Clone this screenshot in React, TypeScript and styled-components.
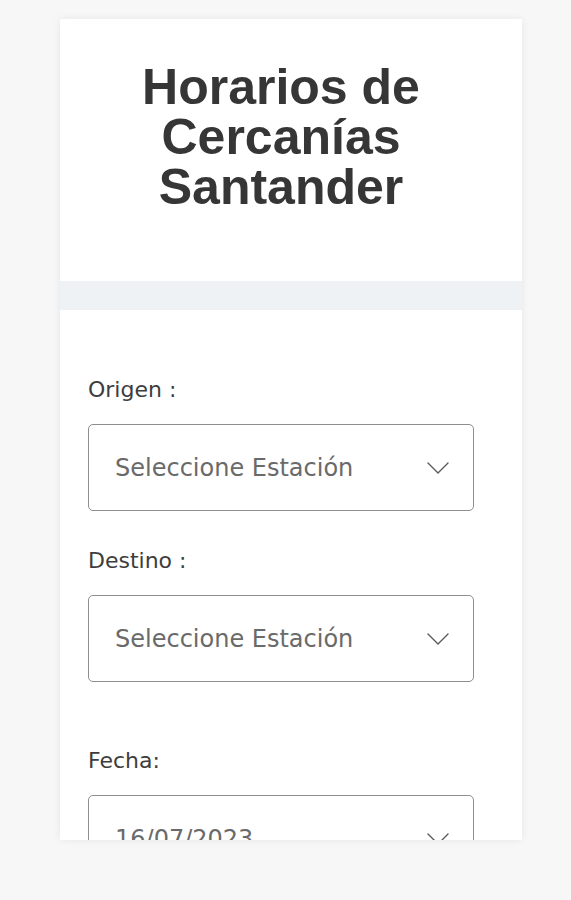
import styled, { createGlobalStyle } from "styled-components";

const GlobalStyle = createGlobalStyle`
  html, body {
    margin: 0;
    padding: 0;
    background: #f7f7f7;
  }
`

function Chevron() {
    return <svg width="22" height="12" viewBox="0 0 22 12" fill="none">
        <polyline points="1,1 11,11 21,1" stroke="#5a5a5a" strokeWidth="1.4" strokeLinecap="round" strokeLinejoin="round"/>
    </svg>
}

function Field({label, value, gap}: { label: string, value: string, gap: number }) {
    return <FieldGroup $gap={gap}>
        <Label>{label}</Label>
        <SelectBox>
            <SelectText>{value}</SelectText>
            <Chevron/>
        </SelectBox>
    </FieldGroup>
}

export default function App() {
    return <Page>
        <GlobalStyle/>
        <Card>
            <Header>
                <Title>Horarios de Cercanías Santander</Title>
            </Header>
            <Band/>
            <Form>
                <Field label="Origen :" value="Seleccione Estación" gap={0}/>
                <Field label="Destino :" value="Seleccione Estación" gap={37}/>
                <Field label="Fecha:" value="16/07/2023" gap={66}/>
            </Form>
        </Card>
    </Page>
}

const Page = styled.div`
  min-height: 900px;
  box-sizing: border-box;
  padding: 19px 49px 0 60px;
  background: #f7f7f7;
`

const Card = styled.div`
  width: 462px;
  height: 821px;
  overflow: hidden;
  background: #ffffff;
  box-shadow: 0 0 8px rgba(0, 0, 0, 0.07);
  display: flex;
  flex-direction: column;
`

const Header = styled.header`
  padding: 43px 40px 69px 20px;
`

const Title = styled.h1`
  margin: 0;
  text-align: center;
  font-family: "Liberation Sans", Arial, sans-serif;
  font-weight: 700;
  font-size: 50px;
  line-height: 50px;
  color: #363636;
`

const Band = styled.div`
  height: 29px;
  flex-shrink: 0;
  background: #eef2f5;
`

const Form = styled.div`
  padding: 67px 48px 0 28px;
  display: flex;
  flex-direction: column;
`

const FieldGroup = styled.div<{ $gap: number }>`
  display: flex;
  flex-direction: column;
  margin-top: ${({$gap}) => $gap}px;
`

const Label = styled.label`
  font-family: "DejaVu Sans", sans-serif;
  font-size: 22px;
  line-height: 26px;
  color: #3d3d3d;
  margin-bottom: 21px;
`

const SelectBox = styled.div`
  box-sizing: border-box;
  width: 386px;
  height: 87px;
  flex-shrink: 0;
  padding: 0 24px 0 26px;
  border: 1.5px solid #8e8e8e;
  border-radius: 5px;
  display: flex;
  align-items: center;
  justify-content: space-between;
`

const SelectText = styled.span`
  font-family: "DejaVu Sans", sans-serif;
  font-size: 24px;
  color: #6a6a6a;
`
